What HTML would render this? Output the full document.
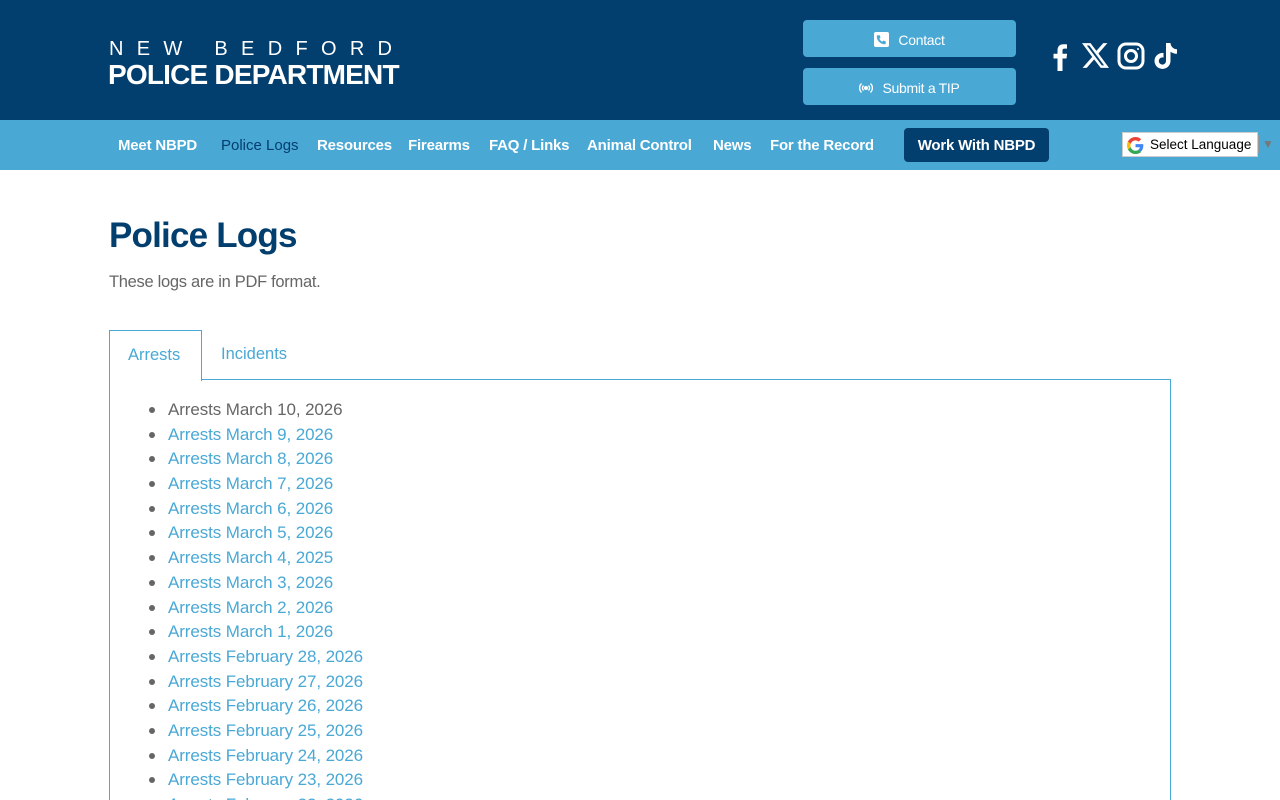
<!DOCTYPE html>
<html style="width:1280px;height:800px;overflow:hidden"><head><meta charset="utf-8"><style>
*{margin:0;padding:0;box-sizing:border-box}
body{width:1280px;height:800px;overflow:hidden;font-family:"Liberation Sans",sans-serif;background:#fff;position:relative}
.top{position:absolute;left:0;top:0;width:1280px;height:120px;background:#023e6e}
.l1{position:absolute;left:109px;top:38px;color:#fff;font-size:20px;letter-spacing:13.3px;white-space:nowrap}
.l2{position:absolute;left:108px;top:59px;color:#fff;font-size:28px;font-weight:bold;letter-spacing:-0.8px;white-space:nowrap}
.btn{position:absolute;left:803px;width:213px;height:37px;background:#4aa8d5;border-radius:4px;color:#fff;font-size:14px;display:flex;align-items:center;justify-content:center;gap:9px;letter-spacing:-0.3px;padding-top:2px}
.nav{position:absolute;left:0;top:120px;width:1280px;height:50px;background:#4aa8d5}
.nav a{position:absolute;top:17px;color:#fff;font-size:15px;font-weight:bold;text-decoration:none;white-space:nowrap;letter-spacing:-0.2px}
.work{position:absolute;left:904px;top:128px;width:145px;height:34px;background:#023e6e;border-radius:4px;color:#fff;font-weight:bold;font-size:15px;display:flex;align-items:center;justify-content:center;letter-spacing:-0.2px}
.lang{position:absolute;left:1122px;top:132px;width:136px;height:25px;background:#fff;border:1px solid #ccc;font-size:13.5px;color:#000;display:flex;align-items:center;padding-left:27px}
h1{position:absolute;left:109px;top:216px;color:#023e6e;font-size:35px;font-weight:bold;letter-spacing:-0.8px}
.sub{position:absolute;left:109px;top:273px;color:#666;font-size:16.5px;letter-spacing:-0.3px}
.panel{position:absolute;left:109px;top:379px;width:1062px;height:440px;border:1px solid #4aa8d5}
.tab{position:absolute;left:109px;top:330px;width:93px;height:51px;border:1px solid #4aa8d5;border-bottom:none;background:#fff;color:#4aa8d5;font-size:16.5px;padding:15px 0 0 18px}
.tab2{position:absolute;left:221px;top:345px;color:#4aa8d5;font-size:16.5px}
ul{position:absolute;left:168px;top:398px;list-style:none}
li{height:24.7px;font-size:17px;color:#4aa8d5;position:relative;white-space:nowrap;letter-spacing:-0.1px;line-height:24px}
li:before{content:"";position:absolute;left:-19px;top:9px;width:6px;height:6px;border-radius:50%;background:#666}
li:first-child{color:#666}
</style></head><body>
<div class="top">
<div class="l1">NEW BEDFORD</div>
<div class="l2">POLICE DEPARTMENT</div>
<div class="btn" style="top:20px"><svg width="15" height="15" viewBox="0 0 16 16"><rect width="16" height="16" rx="2" fill="#fff"/><path d="M4 3.5l2 0 1 2.5-1.3 1a6 6 0 0 0 3.3 3.3l1-1.3 2.5 1v2a1 1 0 0 1-1 1A8.5 8.5 0 0 1 3 4.5a1 1 0 0 1 1-1z" fill="#4aa8d5"/></svg>Contact</div>
<div class="btn" style="top:68px"><svg width="14" height="12" viewBox="0 0 14 12" fill="none" stroke="#fff" stroke-width="1.4"><circle cx="7" cy="6" r="1.3" fill="#fff"/><path d="M4.5 3.5a3.5 3.5 0 0 0 0 5M9.5 3.5a3.5 3.5 0 0 1 0 5M2.5 1.5a6.3 6.3 0 0 0 0 9M11.5 1.5a6.3 6.3 0 0 1 0 9"/></svg>Submit a TIP</div>
<svg style="position:absolute;left:1052px;top:43px" width="16" height="28" viewBox="0 0 16 28"><path d="M10.5 28V15.5h4l.6-4.7h-4.6V7.9c0-1.4.4-2.3 2.3-2.3H15V1.4C14.6 1.3 13.1 1.2 11.4 1.2 7.9 1.2 5.5 3.3 5.5 7.3v3.5H1.5v4.7h4V28z" fill="#fff"/></svg>
<svg style="position:absolute;left:1082px;top:43px" width="27" height="25" viewBox="0 0 24 22"><path d="M18.9 0h3.7l-8 9.2L24 22h-7.4l-5.8-7.6L4.2 22H.5l8.6-9.8L0 0h7.6l5.2 6.9zM17.6 19.8h2L6.5 2.1H4.3z" fill="#fff"/></svg>
<svg style="position:absolute;left:1117px;top:42px" width="28" height="28" viewBox="0 0 28 28" fill="none" stroke="#fff" stroke-width="3"><rect x="2" y="2" width="24" height="24" rx="7"/><circle cx="14" cy="14" r="5.5"/><circle cx="21" cy="7" r="1" fill="#fff" stroke="none"/></svg>
<svg style="position:absolute;left:1153px;top:42px" width="26" height="29" viewBox="0 0 26 29"><path d="M13 1h4.5c.3 3.6 2.7 6 6.5 6.3v4.5c-2.4 0-4.6-.8-6.5-2.1v9.3A8 8 0 1 1 10.5 11v4.6a3.6 3.6 0 1 0 2.5 3.4z" fill="#fff"/></svg>
</div>
<div class="nav">
<a style="left:118px">Meet NBPD</a>
<a style="left:221px;color:#023e6e;font-weight:normal;letter-spacing:0">Police Logs</a>
<a style="left:317px">Resources</a>
<a style="left:408px">Firearms</a>
<a style="left:489px">FAQ / Links</a>
<a style="left:587px">Animal Control</a>
<a style="left:713px">News</a>
<a style="left:770px">For the Record</a>
</div>
<div class="work">Work With NBPD</div>
<div class="lang"><svg style="position:absolute;left:4px;top:4px" width="17" height="17" viewBox="0 0 48 48"><path fill="#EA4335" d="M24 9.5c3.5 0 6.6 1.2 9.1 3.6l6.8-6.8C35.8 2.4 30.2 0 24 0 14.6 0 6.6 5.4 2.6 13.2l7.9 6.2C12.4 13.7 17.7 9.5 24 9.5z"/><path fill="#4285F4" d="M46.1 24.5c0-1.6-.1-3.1-.4-4.5H24v9h12.4c-.5 2.9-2.2 5.3-4.6 7l7.3 5.700c4.3-4 7-9.9 7-17.2z"/><path fill="#FBBC05" d="M10.5 28.6c-.5-1.4-.8-3-.8-4.6s.3-3.200.8-4.6l-7.9-6.2C.9 16.5 0 20.1 0 24s.9 7.5 2.6 10.8z"/><path fill="#34A853" d="M24 48c6.5 0 11.9-2.1 15.9-5.8l-7.3-5.7c-2.1 1.4-4.8 2.3-8.6 2.3-6.3 0-11.6-4.2-13.5-10L2.6 34.8C6.6 42.6 14.6 48 24 48z"/></svg>Select Language</div>
<div style="position:absolute;left:1258px;top:135px;width:1px;height:18px;background:#999"></div>
<div style="position:absolute;left:1262px;top:137px;color:#777;font-size:12px">▼</div>
<h1>Police Logs</h1>
<div class="sub">These logs are in PDF format.</div>
<div class="panel"></div>
<div class="tab">Arrests</div>
<div class="tab2">Incidents</div>
<ul>
<li>Arrests March 10, 2026</li><li>Arrests March 9, 2026</li><li>Arrests March 8, 2026</li><li>Arrests March 7, 2026</li><li>Arrests March 6, 2026</li><li>Arrests March 5, 2026</li><li>Arrests March 4, 2025</li><li>Arrests March 3, 2026</li><li>Arrests March 2, 2026</li><li>Arrests March 1, 2026</li><li>Arrests February 28, 2026</li><li>Arrests February 27, 2026</li><li>Arrests February 26, 2026</li><li>Arrests February 25, 2026</li><li>Arrests February 24, 2026</li><li>Arrests February 23, 2026</li><li>Arrests February 22, 2026</li>
</ul>
</body></html>
